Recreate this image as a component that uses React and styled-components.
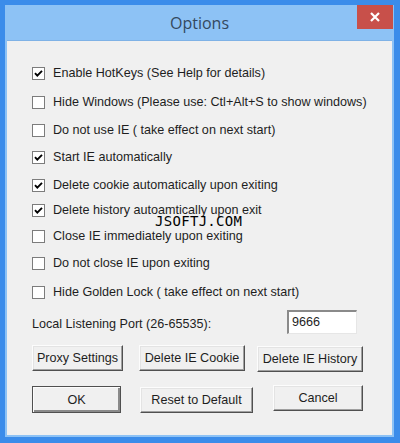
import React from 'react';
import styled, { createGlobalStyle } from 'styled-components';

const GlobalStyle = createGlobalStyle`
	html, body {
		margin: 0;
		padding: 0;
		background: #3b8cea;
	}
`;

const Outer = styled.div`
	width: 400px;
	height: 443px;
	box-sizing: border-box;
	padding: 5px 6px 6px 5px;
	background: #3b8cea;
	display: flex;
`;

const Frame = styled.div`
	flex: 1;
	display: flex;
	flex-direction: column;
	background: #8dc2f5;
	padding: 0 2px 2px 2px;
`;

const TitleBar = styled.div`
	height: 35px;
	display: grid;
	grid-template-columns: 1fr auto 1fr;
	align-items: center;
	border-bottom: 1px solid #7fb2e6;
`;

const Title = styled.div`
	grid-column: 2;
	font-family: 'Open Sans', 'Noto Sans', sans-serif;
	font-size: 16px;
	color: #34495e;
	padding-top: 1px;
`;

const CloseButton = styled.div`
	grid-column: 3;
	justify-self: end;
	align-self: start;
	width: 36px;
	height: 24px;
	margin-right: -1px;
	background: #c8504a;
	display: flex;
	align-items: center;
	justify-content: center;
`;

const Content = styled.div`
	position: relative;
	flex: 1;
	background: #f0f0f0;
	padding: 0 0 0 25px;
	font-family: 'Liberation Sans', Arial, sans-serif;
	font-size: 12.6px;
	color: #1e1e1e;
	display: flex;
	flex-direction: column;
`;

const OptionRow = styled.label`
	display: flex;
	align-items: center;
	height: 16px;
	margin-top: ${p => p.$space}px;
	gap: 8px;
`;

const Box = styled.span`
	width: 11px;
	height: 11px;
	border: 1px solid #7c7c7c;
	background: #fff;
	display: flex;
	align-items: center;
	justify-content: center;
	flex: none;
`;

const PortRow = styled.div`
	display: flex;
	align-items: center;
	margin-top: 9px;
	height: 26px;
`;

const PortLabel = styled.span`
	width: 255px;
	padding-top: 3px;
`;

const PortInput = styled.div`
	width: 61px;
	height: 21px;
	background: #fff;
	border-style: solid;
	border-width: 2px 1px 1px 2px;
	border-color: #8a8a8a #e6e6e6 #e6e6e6 #8a8a8a;
	padding: 0 3px;
	line-height: 21px;
`;

const ButtonRow = styled.div`
	display: flex;
	align-items: flex-start;
	margin-top: ${p => p.$space}px;
`;

const Button = styled.div`
	box-sizing: border-box;
	width: ${p => p.$w}px;
	height: ${p => (p.$default ? 27 : 26)}px;
	margin-top: ${p => p.$dy || 0}px;
	margin-left: ${p => p.$ml || 0}px;
	background: #f0f0f0;
	border: 1px solid;
	border-color: ${p => (p.$default ? '#505050' : '#fcfcfc #505050 #505050 #fcfcfc')};
	box-shadow: ${p =>
		p.$default
			? 'inset 1px 1px 0 #fcfcfc, inset -2px -2px 0 #8a8a8a'
			: 'inset -1px -1px 0 #a0a0a0, inset 1px 1px 0 #e3e3e3'};
	display: flex;
	align-items: center;
	justify-content: center;
	white-space: nowrap;
`;

const Watermark = styled.div`
	position: absolute;
	left: 148px;
	top: 172px;
	font-family: 'DejaVu Sans Mono', 'Liberation Mono', monospace;
	font-size: 14px;
	color: #000;
	letter-spacing: 0.3px;
`;

const options = [
	{ text: 'Enable HotKeys (See Help for details)', checked: true, space: 24 },
	{ text: 'Hide Windows (Please use: Ctl+Alt+S to show windows)', checked: false, space: 13 },
	{ text: 'Do not use IE ( take effect on next start)', checked: false, space: 12 },
	{ text: 'Start IE automatically', checked: true, space: 11 },
	{ text: 'Delete cookie automatically upon exiting', checked: true, space: 12 },
	{ text: 'Delete history autoamtically upon exit', checked: true, space: 9 },
	{ text: 'Close IE immediately upon exiting', checked: false, space: 10 },
	{ text: 'Do not close IE upon exiting', checked: false, space: 11 },
	{ text: 'Hide Golden Lock ( take effect on next start)', checked: false, space: 13 },
];

const Check = () => (
	<svg width="9" height="9" viewBox="0 0 9 9">
		<path d="M1 4.2 L3.3 6.6 L8 1.8" fill="none" stroke="#000" strokeWidth="1.9" />
	</svg>
);

export default function App() {
	return (
		<Outer>
			<GlobalStyle />
			<Frame>
				<TitleBar>
					<Title>Options</Title>
					<CloseButton>
						<svg width="10" height="10" viewBox="0 0 10 10">
							<path d="M1 1 L9 9 M9 1 L1 9" stroke="#fff" strokeWidth="2.2" />
						</svg>
					</CloseButton>
				</TitleBar>
				<Content>
					{options.map(o => (
						<OptionRow key={o.text} $space={o.space}>
							<Box>{o.checked && <Check />}</Box>
							<span>{o.text}</span>
						</OptionRow>
					))}
					<PortRow>
						<PortLabel>Local Listening Port (26-65535):</PortLabel>
						<PortInput>9666</PortInput>
					</PortRow>
					<ButtonRow $space={10}>
						<Button $w={91}>Proxy Settings</Button>
						<Button $w={106} $ml={16}>Delete IE Cookie</Button>
						<Button $w={106} $ml={12} $dy={1}>Delete IE History</Button>
					</ButtonRow>
					<ButtonRow $space={14}>
						<Button $w={89} $default>OK</Button>
						<Button $w={113} $ml={19} $dy={1}>Reset to Default</Button>
						<Button $w={90} $ml={20} $dy={-1}>Cancel</Button>
					</ButtonRow>
					<Watermark>JSOFTJ.COM</Watermark>
				</Content>
			</Frame>
		</Outer>
	);
}
